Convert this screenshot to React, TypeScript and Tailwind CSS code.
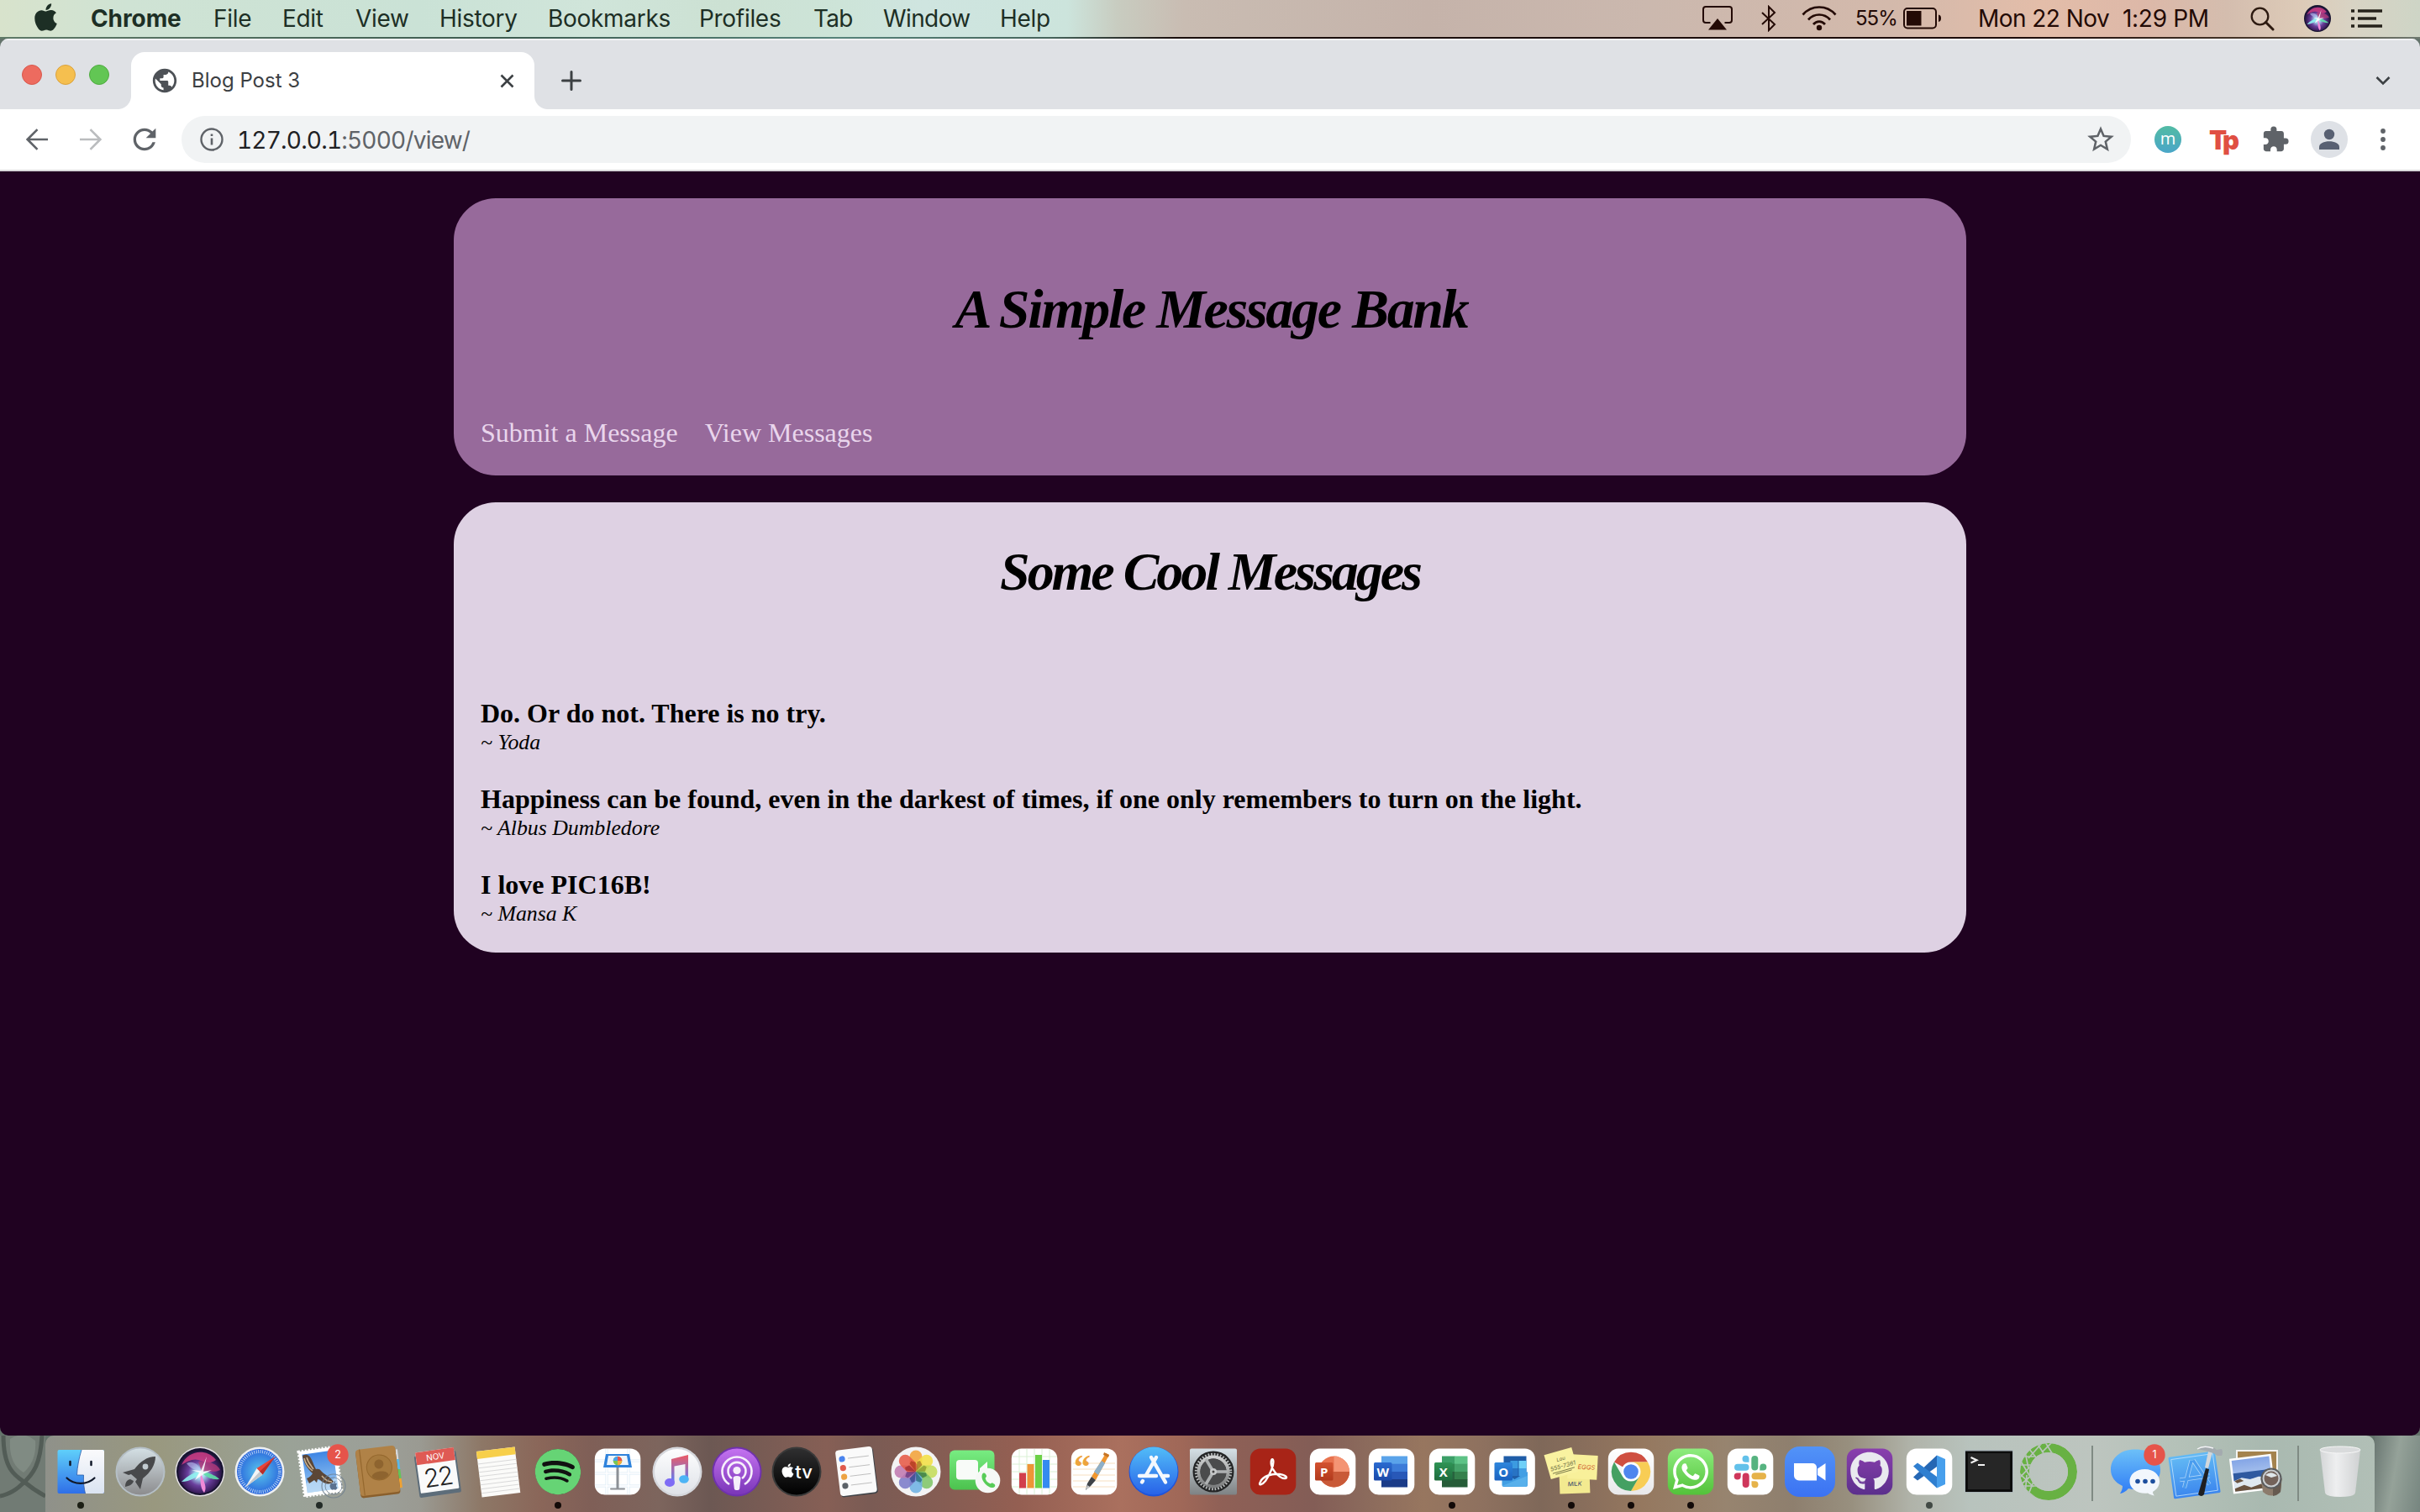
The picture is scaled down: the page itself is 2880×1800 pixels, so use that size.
import type { ReactNode } from "react";
import { FaApple, FaGithub, FaSpotify, FaWhatsapp } from "react-icons/fa";
import { MdExtension, MdPublic, MdRefresh, MdStarBorder } from "react-icons/md";

/* ---------- shared drawing helpers ---------- */

function Gradients() {
  const lin = (id: string, a: string, b: string) => (
    <linearGradient id={id} x1="0" y1="0" x2="0" y2="1">
      <stop offset="0" stopColor={a} />
      <stop offset="1" stopColor={b} />
    </linearGradient>
  );
  return (
    <svg className="absolute h-0 w-0" aria-hidden="true">
      <defs>
        {lin("gFinder", "#5fcffa", "#2f6fe8")}
        {lin("gFinderR", "#fafafc", "#dbe4f2")}
        {lin("gLaunch", "#d3dfe4", "#8c8c8e")}
        {lin("gMail", "#3f86e4", "#9cc9f2")}
        {lin("gWhite", "#fdfdfe", "#dfe2e8")}
        {lin("gPod", "#c472f0", "#7a36b8")}
        {lin("gTv", "#2f2f30", "#000000")}
        {lin("gFace", "#78ec82", "#4cc24e")}
        {lin("gStore", "#52bdf8", "#2862e8")}
        {lin("gPref", "#d5e0e6", "#7e8284")}
        {lin("gMetal", "#d0d2d2", "#7b7d7e")}
        {lin("gWhats", "#8eec7e", "#53c23a")}
        {lin("gZoom", "#5293f7", "#3b72f3")}
        {lin("gGit", "#8a3fae", "#5b2f8c")}
        {lin("gMsg", "#6cc0f8", "#2f7cf6")}
        {lin("gXcode", "#63baf4", "#3b86ee")}
        {lin("gNote", "#ed5a64", "#5c7df6")}
        {lin("gChromeBg", "#ffffff", "#e8e8ea")}
        {lin("gSea", "#84a5e6", "#c8dcf4")}
        {lin("gPpt", "#d35230", "#b13a1c")}
        {lin("gWord", "#2b6bd0", "#1a48a8")}
        {lin("gExcel", "#2f9455", "#1f6b3c")}
        {lin("gOutlook", "#2f86dc", "#1a62c0")}
        {lin("gMm", "#52bba4", "#4aa6c8")}
        <radialGradient id="gSiri" cx="50%" cy="55%" r="55%">
          <stop offset="0" stopColor="#f4ffff" />
          <stop offset="0.22" stopColor="#9fd0ea" />
          <stop offset="0.5" stopColor="#6a3f9c" />
          <stop offset="0.8" stopColor="#3a1d5c" />
          <stop offset="1" stopColor="#14122e" />
        </radialGradient>
        <radialGradient id="gSafari">
          <stop offset="0" stopColor="#59c7ec" />
          <stop offset="1" stopColor="#2a66dc" />
        </radialGradient>
        <linearGradient id="gTrash" x1="0" x2="1">
          <stop offset="0" stopColor="#d4d6d7" />
          <stop offset="0.4" stopColor="#eeeff0" />
          <stop offset="1" stopColor="#cfd1d2" />
        </linearGradient>
        <clipPath id="ringClip">
          <path clipRule="evenodd" d="M0-34A34 34 0 1 1 0 34A34 34 0 1 1 0-34ZM0-23A23 23 0 1 0 0 23A23 23 0 1 0 0-23Z" />
        </clipPath>
      </defs>
    </svg>
  );
}

function SiriOrb() {
  return (
    <g>
      <circle r="28" fill="#17132f" />
      <circle r="26" fill="url(#gSiri)" />
      <path d="M-22-8C-14-26 8-28 19-14C12-8 4-12-2-14S-16-12-22-8Z" fill="#cf3d84" opacity="0.85" />
      <path d="M-2-12C10-14 22-8 24-2C16 2 8-2 2 0Z" fill="#b23a78" opacity="0.8" />
      <path d="M-22 12C-14 4-6 0 1 0C-2 6-12 12-22 12Z" fill="#8ff2f0" opacity="0.9" />
      <path d="M1 0C8 0 18 4 23 9C14 10 6 6 1 0Z" fill="#5fe0a8" opacity="0.9" />
      <path d="M1-1C2 8 10 18 5 25C0 20 0 8 1-1Z" fill="#f08ad8" />
      <path d="M-16-10C-8-14 0-8 1 0C-6-2-12-4-16-10Z" fill="#b9c6f4" opacity="0.6" />
      <path d="M1-1L8-18L4 0L14-2L4 3L-6 10L-1 1L-10-2Z" fill="#fff" opacity="0.85" />
    </g>
  );
}

function AppTile({ fill = "#fff" }: { fill?: string }) {
  return <rect x="-27.2" y="-27.5" width="54.5" height="55" rx="12" fill={fill} />;
}

function OfficeBadge({ letter, fill }: { letter: string; fill: string }) {
  return (
    <g>
      <rect x="-21" y="-11" width="21.5" height="21.5" rx="1.5" fill={fill} />
      <text x="-10.3" y="5.6" textAnchor="middle" fontFamily="Open Sans, sans-serif" fontWeight="700" fontSize="15" fill="#fff">
        {letter}
      </text>
    </g>
  );
}

function CountBadge({ x, count }: { x: number; count: string }) {
  return (
    <g>
      <circle cx={x} cy="-20" r="12.7" fill="#e6544a" />
      <text x={x} y="-15.6" textAnchor="middle" fontFamily="Inter, sans-serif" fontSize="12.5" fill="#fff">
        {count}
      </text>
    </g>
  );
}

/* ---------- dock icons, drawn around (0,0) ---------- */

const finder = (
  <g>
    <rect x="-27.5" y="-26" width="55.5" height="52" rx="2" fill="url(#gFinder)" />
    <path d="M1-26C-2-16-4-6-4.500 4H3.500C3 12 4 20 5.500 26H26a2 2 0 0 0 2-2V-24a2 2 0 0 0-2-2Z" fill="url(#gFinderR)" />
    <path d="M1-26C-2-16-4-6-4.500 4H3.500C3 12 4 20 5.500 26" fill="none" stroke="#2b5ba8" strokeWidth="0.8" />
    <path d="M-12.500-12v4M12.500-12v4" stroke="#101828" strokeWidth="2.500" strokeLinecap="round" />
    <path d="M-16.500 7.500C-8 16 8 16 16.500 7.500" fill="none" stroke="#101828" strokeWidth="2.200" strokeLinecap="round" />
  </g>
);

const launchpad = (
  <g>
    <circle r="29.500" fill="#b5bfc6" />
    <circle r="27.500" fill="url(#gLaunch)" />
    <path d="M18-18C8-18 0-12-7-3L-21 1L-14 4L-11 3L-4 9L-6 12L0 21L3 8C12 1 18-8 18-18Z" fill="#48494b" />
    <circle cx="6" cy="-6" r="3.400" fill="#c2cbd0" />
    <path d="M-12 9C-17 10-18 14-18 18C-13 17-9 15-8 11Z" fill="#48494b" />
  </g>
);

const siri = (
  <g>
    <circle r="29.500" fill="#e4e0e4" />
    <SiriOrb />
  </g>
);

const safari = (
  <g>
    <circle r="29.500" fill="#eef0f2" />
    <circle r="27" fill="url(#gSafari)" />
    <circle r="24" fill="none" stroke="#e4f2fc" strokeWidth="4" strokeDasharray="0.900 1.613" opacity="0.8" />
    <path d="M18.500-18L-3.500-4L3.500 3.500Z" fill="#e8433a" />
    <path d="M-17 18.500L-3.500-4L3.500 3.500Z" fill="#f4f5f6" />
    <path d="M18.500-18L3.500 3.500L0 0Z" fill="#b92f2a" />
    <path d="M-17 18.500L0 0L3.500 3.500Z" fill="#c4c8cc" />
  </g>
);

const mail = (
  <g>
    <g transform="rotate(-8) translate(1 0)">
      <rect x="-22.500" y="-27" width="45" height="54" fill="#fff" />
      <rect x="-22.500" y="-27" width="45" height="54" fill="none" stroke="#fff" strokeWidth="3" strokeDasharray="2 2" />
      <rect x="-18.500" y="-23" width="37" height="46" fill="url(#gMail)" />
      <path d="M-18.500 12Q-8 6 0 12T18.500 8V23H-18.500Z" fill="#c4dff6" opacity="0.7" />
    </g>
    <path d="M-20-19C-15-22-11-19-9-14C-7-10-6-6-4-3C-1-4 1-3 3 0C7 4 13 6 17 12C13 16 6 15 1 10C0 9-1 9-2 9L-3 13L-6 10L-12 14L-14 10L-15 8C-12 7-9 4-8 2C-14-3-19-11-20-19Z" fill="#5b4636" />
    <path d="M-18-16C-16-8-12-4-8-1M-15-17C-13-10-9-6-7-3M3 5C7 10 11 12 15 12" stroke="#c9b08e" strokeWidth="1.500" fill="none" />
    <circle cx="17" cy="17" r="14" fill="none" stroke="#6f7f90" strokeWidth="1.200" opacity="0.8" />
    <circle cx="17" cy="17" r="10" fill="none" stroke="#6f7f90" strokeWidth="1" opacity="0.8" />
    <g transform="translate(11 10.500)" className="text-[#5b7290]">
      <FaApple size={12} />
    </g>
    <CountBadge x={22} count="2" />
  </g>
);

const contacts = (
  <g transform="rotate(-7)">
    <path d="M22-24h3v12h-3z" fill="#d7d8da" />
    <path d="M22-12h3.500v12H22z" fill="#5cb8e6" />
    <path d="M22 0h3.500v11H22z" fill="#63c45a" />
    <path d="M22 11h3.500v11H22z" fill="#efa233" />
    <rect x="-25" y="-28" width="47.500" height="57" rx="4" fill="#8a5f2c" />
    <rect x="-25" y="-29" width="47.500" height="55.500" rx="4" fill="#b08247" />
    <path d="M-20-29v55" stroke="#94682e" strokeWidth="1.200" />
    <circle cx="1" cy="-5" r="15" fill="#a67a3e" stroke="#94682e" strokeWidth="1" />
    <circle cx="1" cy="-9" r="5.500" fill="#8e642f" />
    <path d="M-9 5C-8-2 10-2 11 5C6 11-4 11-9 5Z" fill="#8e642f" />
  </g>
);

const calendar = (
  <g transform="translate(-1.500 0) rotate(-8)">
    <rect x="-25" y="-22" width="50" height="50" rx="2" fill="#5d6d7a" />
    <rect x="-23" y="-26" width="46" height="49" rx="1" fill="#fafafa" />
    <path d="M-23-26H23V-11H-23Z" fill="#df5a54" />
    <text y="-14.500" textAnchor="middle" fontFamily="Inter, sans-serif" fontSize="10" fill="#fff">NOV</text>
    <text y="17" textAnchor="middle" fontFamily="Inter, sans-serif" fontWeight="300" fontSize="30" letterSpacing="-1.500" fill="#222">22</text>
  </g>
);

const notes = (
  <g transform="rotate(-7)">
    <rect x="-23" y="-27" width="46" height="55" fill="#fbfbf9" />
    <rect x="-23" y="-27" width="46" height="9" fill="#f7cf4a" />
    <path d="M-23-12H23M-23-7H23M-23-2H23M-23 3H23M-23 8H23M-23 13H23M-23 18H23M-23 23H23" stroke="#d9d9d9" strokeWidth="1" />
  </g>
);

const spotify = (
  <g>
    <circle r="27" fill="#111" />
    <g transform="translate(-28 -28)" className="text-[#66d475]">
      <FaSpotify size={56} />
    </g>
  </g>
);

const keynote = (
  <g>
    <AppTile />
    <path d="M-27-13H27M-27 2H27M-27 17H27M-13-27V27M13-27V27" stroke="#dcebf6" strokeWidth="3" />
    <path d="M-27-13H27M-27 2H27M-27 17H27M-13-27V27M13-27V27" stroke="#fff" strokeWidth="1.600" />
    <path d="M-14-21H14L17-5H-17Z" fill="#2f83dc" />
    <path d="M-11-19H11L13-8H-13Z" fill="#eef4fa" />
    <circle cy="-13" r="5.300" fill="#7cc653" />
    <path d="M0-13V-18.300A5.300 5.300 0 0 1 5.300-13Z" fill="#e8534a" />
    <path d="M0-13H-5.300A5.300 5.300 0 0 1 0-18.300Z" fill="#4aa3e8" />
    <path d="M0-13H5.300A5.300 5.300 0 0 1 0-7.700Z" fill="#f3a93c" />
    <rect x="-1.500" y="-5" width="3" height="25" fill="#8c9096" />
    <rect x="-9" y="19.500" width="18" height="2" rx="1" fill="#8c9096" />
  </g>
);

const music = (
  <g>
    <circle r="29.500" fill="#d5d7dc" />
    <circle r="27" fill="url(#gWhite)" />
    <path d="M-7-15L13-20V8H9.500V-9L-3.500-6.500V12H-7Z" fill="url(#gNote)" />
    <ellipse cx="-9" cy="13" rx="6" ry="5" fill="#7e6cf5" />
    <ellipse cx="8" cy="9" rx="5.800" ry="4.800" fill="#4db4f5" />
  </g>
);

const podcasts = (
  <g>
    <circle r="29.500" fill="#6f31ad" />
    <circle r="27.500" fill="url(#gPod)" />
    <path d="M-9 15A17.500 17.500 0 1 1 9 15M-6 8A10.500 10.500 0 1 1 6 8" fill="none" stroke="#f6effb" strokeWidth="2.600" />
    <circle cy="-1.500" r="4.600" fill="#f6effb" />
    <path d="M-4.500 8Q-4.500 5 0 5T4.500 8L3.200 20Q3 22 0 22T-3.200 20Z" fill="#f6effb" />
  </g>
);

const appleTv = (
  <g>
    <circle r="29.500" fill="#3a3a3a" />
    <circle r="27.500" fill="url(#gTv)" />
    <g transform="translate(-20 -11)" className="text-white">
      <FaApple size={19} />
    </g>
    <text x="8.500" y="7.500" textAnchor="middle" fontFamily="Inter, sans-serif" fontWeight="500" fontSize="22" fill="#fff">tv</text>
  </g>
);

const reminders = (
  <g transform="rotate(-7)">
    <rect x="-21" y="-26.500" width="44" height="55" rx="4" fill="#3e4348" />
    <rect x="-22" y="-28" width="44" height="55" rx="4" fill="#fafafa" />
    {["#4a84ee", "#e05a4c", "#eda343", "#5c6268"].map((c, i) => (
      <g key={c}>
        <circle cx="-15" cy={-17 + i * 10.700} r="3.600" fill={c} />
        <path d={`M-8 ${-17 + i * 10.700}H17`} stroke="#bbb" strokeWidth="0.900" />
      </g>
    ))}
  </g>
);

const photos = (
  <g>
    <circle r="29.500" fill="#f3f3f4" />
    {["#f2a33a", "#f3df44", "#c4dc5a", "#80c568", "#6eb2e4", "#7c7cc8", "#c07ab0", "#e65a48"].map((c, i) => (
      <rect key={c} x="-7.500" y="-25.500" width="15" height="25" rx="7.500" fill={c} opacity="0.88" transform={`rotate(${i * 45})`} />
    ))}
    {["#a8782c", "#8c9a30", "#3c7a44", "#2c6c80", "#384a90", "#6a3a80", "#a02c30", "#b03c20"].map((c, i) => (
      <path key={c} d="M0 0L1.500-12L5-13L7.500-8Z" fill={c} opacity="0.8" transform={`rotate(${i * 45})`} />
    ))}
  </g>
);

const facetime = (
  <g>
    <rect x="-31" y="-25.500" width="53.500" height="47" rx="6" fill="url(#gFace)" />
    <rect x="-23" y="-14" width="26" height="23.500" rx="4" fill="#f8fbf8" />
    <path d="M5-4L14-12V8H5Z" fill="#f8fbf8" />
    <circle cx="14.500" cy="10.500" r="14.800" fill="#f6f8f6" />
    <path d="M8 3C10 0 12 2 13 5C13 7 11 7 12 9C13 12 15 13 17 14C19 15 19 12 21 14C24 15 24 18 21 19C15 20 5 10 8 3Z" fill="#58cc58" />
  </g>
);

const numbers = (
  <g>
    <AppTile />
    <path d="M-27-18H27M-27-9H27M-27 0H27M-27 9H27M-27 18H27M-18-27V27M-9-27V27M0-27V27M9-27V27M18-27V27" stroke="#d9f0d4" strokeWidth="1" />
    <rect x="-18" y="1.500" width="8" height="18" fill="#d23f4c" />
    <rect x="-8.500" y="-9" width="8" height="28.500" fill="#ee9537" />
    <rect x="1" y="-20" width="8" height="39.500" fill="#6cd147" />
    <rect x="10" y="-14" width="8" height="33.500" fill="#348bf0" />
  </g>
);

const pages = (
  <g>
    <AppTile />
    <path d="M-25-10H25M-25-3H25M-25 4H25M-25 11H25M-25 18H25" stroke="#f7dfc0" strokeWidth="1" />
    <text x="-14" y="8" textAnchor="middle" fontFamily="Liberation Serif, serif" fontWeight="700" fontSize="40" fill="#eda43c">“</text>
    <path d="M14-22L18-20L2 10L-3 6Z" fill="#f0962f" />
    <path d="M9-13L13-10L5 4L0 0Z" fill="#8fb0c8" />
    <path d="M12-23L18-20L17-17L11-20Z" fill="#c77524" />
    <path d="M-3 6L2 10L-4 17L-10 22L-8 14Z" fill="#3e4248" />
    <path d="M-8 16L-5 18L-10 22Z" fill="#c8cacc" />
  </g>
);

const appStore = (
  <g>
    <circle r="29.500" fill="#1d54dc" />
    <circle r="28.500" cy="-1" fill="url(#gStore)" />
    <g stroke="#f4f8fd" strokeWidth="4.400" strokeLinecap="round" fill="none">
      <path d="M3-17L-9 4M-13 11L-14 12.500M-3-17L14 12.500M-17 5H3M12 5H17" />
    </g>
  </g>
);

const preferences = (
  <g>
    <rect x="-28" y="-27.500" width="56" height="55" rx="2" fill="url(#gPref)" />
    <circle r="24.500" fill="#232425" />
    <circle r="20.500" fill="none" stroke="#b5b8b9" strokeWidth="3.500" strokeDasharray="1.800 1.780" />
    <circle r="17.500" fill="none" stroke="url(#gMetal)" strokeWidth="4" />
    <circle r="15.500" fill="#4a4b4c" />
    <g stroke="#aeb1b2" strokeWidth="3.600">
      <path d="M0 0H17M0 0L-9-15M0 0L-9 15" />
    </g>
    <circle r="4" fill="#c7c9ca" />
    <circle r="1.500" fill="#444" />
  </g>
);

const acrobat = (
  <g>
    <AppTile fill="#a82417" />
    <path
      d="M-15 12C-12 5-1 2 8 3C16 4 18 8 14 8C8 8 0 0-2-8C-3-14-1-16 0-14C2-9-4 4-9 11C-13 16-18 17-15 12Z"
      fill="none"
      stroke="#fff"
      strokeWidth="2.400"
    />
  </g>
);

const powerpoint = (
  <g>
    <AppTile />
    <circle cx="1.500" r="18.500" fill="#e8734f" />
    <path d="M1.500-18.500A18.500 18.500 0 0 1 20 0H1.500Z" fill="#f49474" />
    <path d="M-17 0H20A18.500 18.500 0 0 1-17 0Z" fill="#c95a38" />
    <OfficeBadge letter="P" fill="url(#gPpt)" />
  </g>
);

const word = (
  <g transform="translate(-1 0)">
    <AppTile />
    <rect x="-12" y="-18.500" width="31" height="9.500" fill="#5aa3ea" />
    <rect x="-12" y="-9.300" width="31" height="9.500" fill="#3c7bd8" />
    <rect x="-12" y="0" width="31" height="9.300" fill="#2858b8" />
    <rect x="-12" y="9" width="31" height="9.500" fill="#1b3c88" />
    <OfficeBadge letter="W" fill="url(#gWord)" />
  </g>
);

const excel = (
  <g>
    <AppTile />
    <rect x="-12" y="-18.500" width="15.500" height="9.500" fill="#3c9f68" />
    <rect x="3" y="-18.500" width="15.500" height="9.500" fill="#5dc286" />
    <rect x="-12" y="-9.300" width="15.500" height="9.500" fill="#2f8850" />
    <rect x="3" y="-9.300" width="15.500" height="9.500" fill="#46a36a" />
    <rect x="-12" y="0" width="15.500" height="9.300" fill="#27633e" />
    <rect x="3" y="0" width="15.500" height="9.300" fill="#35804c" />
    <rect x="-12" y="9" width="30.500" height="9.500" fill="#265c38" />
    <OfficeBadge letter="X" fill="url(#gExcel)" />
  </g>
);

const outlook = (
  <g transform="translate(0.500 0)">
    <AppTile />
    <rect x="-10" y="-18.500" width="27" height="30" fill="#1f5da8" />
    <rect x="-2" y="-13" width="9" height="9" fill="#3c9be0" />
    <rect x="8" y="-13" width="9" height="9" fill="#6fd0f8" />
    <rect x="-2" y="-4" width="9" height="9" fill="#2873c4" />
    <rect x="8" y="-4" width="9" height="9" fill="#429fe4" />
    <path d="M-12 0L3 9L18.500 0V16a2 2 0 0 1-2 2H-10a2 2 0 0 1-2-2Z" fill="#429fe4" />
    <path d="M-12 17L18 5V16L16 18Z" fill="#62b8ee" opacity="0.7" />
    <OfficeBadge letter="O" fill="url(#gOutlook)" />
  </g>
);

const stickies = (
  <g>
    <g transform="rotate(-2 3 14)">
      <rect x="-14" y="-2" width="36" height="28" fill="#f3ea90" />
      <text x="4" y="17" textAnchor="middle" fontFamily="Inter, sans-serif" fontStyle="italic" fontSize="7" fill="#31406a">MILK</text>
    </g>
    <g transform="rotate(3 14 -6)">
      <rect x="-4" y="-20" width="35" height="29" fill="#f8f09a" />
      <text x="18" y="-3" textAnchor="middle" fontFamily="Inter, sans-serif" fontStyle="italic" fontSize="7.500" fill="#cf5a2c">EGGS</text>
    </g>
    <g transform="rotate(-16 -12 -10)">
      <rect x="-29" y="-25" width="34" height="30" fill="#f9f2a0" />
      <text x="-11" y="-13" textAnchor="middle" fontFamily="Inter, sans-serif" fontStyle="italic" fontSize="6" fill="#6a6a40">Lou</text>
      <text x="-11" y="-4" textAnchor="middle" fontFamily="Inter, sans-serif" fontStyle="italic" fontSize="7" fill="#6a6a40">555-7361</text>
      <path d="M-25-1H2M-22 1H-2" stroke="#6a6a40" strokeWidth="0.800" />
    </g>
  </g>
);

const chrome = (
  <g>
    <AppTile fill="url(#gChromeBg)" />
    <path d="M-20-11.500A23 23 0 0 1 20-11.500H0A11.500 11.500 0 0 0-10 -5.700Z" fill="#cf4f41" />
    <path d="M20-11.500A23 23 0 0 1 0 23L10 5.700A11.500 11.500 0 0 0 0-11.500Z" fill="#f8cd55" />
    <path d="M0 23A23 23 0 0 1-20-11.500L-10 5.700A11.500 11.500 0 0 0 10 5.700Z" fill="#45a062" />
    <circle r="11" fill="#fff" />
    <circle r="8.800" fill="#4f86ee" />
  </g>
);

const whatsapp = (
  <g>
    <AppTile fill="url(#gWhats)" />
    <g transform="translate(-24 -24)" className="text-white">
      <FaWhatsapp size={48} />
    </g>
  </g>
);

const slack = (
  <g>
    <AppTile />
    {[
      ["#62c1ea", 0],
      ["#56b380", 90],
      ["#e6b34a", 180],
      ["#cf375b", 270],
    ].map(([c, r]) => (
      <g key={String(c)} transform={`rotate(${r})`} fill={String(c)}>
        <rect x="-19" y="-9.300" width="17.500" height="8" rx="4" />
        <path d="M-1.500-11.300H-5.500A4 4 0 1 1-1.500-15.300Z" />
      </g>
    ))}
  </g>
);

const zoomApp = (
  <g>
    <rect x="-30" y="-30" width="60" height="60" rx="18" fill="url(#gZoom)" />
    <path d="M-19-10H3a5 5 0 0 1 5 5V10.500H-13a6 6 0 0 1-6-6Z" fill="#fff" />
    <path d="M9-3.500L18.500-10V10.500L9 4Z" fill="#fff" />
  </g>
);

const github = (
  <g>
    <AppTile fill="url(#gGit)" />
    <g transform="translate(-23.500 -24)" className="text-[#e9e9ef]">
      <FaGithub size={47} />
    </g>
  </g>
);

const vscode = (
  <g>
    <AppTile />
    <path d="M9-19.500L-19 6.500L-14 10.500L9-6Z" fill="#2567b4" />
    <path d="M9 19.500L-19-6.500L-14-10.500L9 6Z" fill="#2f7fd0" />
    <path d="M9-19.500L19-15V15L9 19.500Z" fill="#479fec" />
  </g>
);

const terminal = (
  <g>
    <rect x="-29" y="-26" width="58" height="51" rx="2" fill="#a9b4b8" />
    <rect x="-28" y="-24.500" width="56" height="48.500" fill="#0c0c0c" />
    <rect x="-25" y="-22" width="50" height="43" fill="#262626" />
    <path d="M-21.500-17L-14.500-13.700L-21.500-10.500M-13-8H-5" fill="none" stroke="#f2f2f2" strokeWidth="2.100" />
  </g>
);

const anaconda = (
  <g clipPath="url(#ringClip)">
    <circle r="28.500" fill="none" stroke="#68b143" strokeWidth="11" />
    <g stroke="#bac4be" strokeWidth="1.700" fill="none">
      <path d="M4-35L-8-23M-4-35L4-22M-14-34L-6-22M-8-34L-24-16M-24-28L-14-16M-34-18L-16-18M-28-24L-24-4M-37-8L-20-8M-34-14L-22 6M-20-8L-37 10M-37 0L-18 18M-20 4L-36 18M-36 17H-14M-26 4L-28 28M-18 12L-26 32M-32 18L-12 34" />
    </g>
  </g>
);

const messages = (
  <g>
    <path d="M-2-26.500C17-26.500 28-16 28-2.500S17 21-2 21C-5 21-8 20.500-10 20C-13 24-17 25.500-20 26C-18 23-17 20-17 17C-26 13-31 6-31-2.500C-31-16-20-26.500-2-26.500Z" fill="url(#gMsg)" />
    <path d="M9.500-3C20-3 27 3.500 27 11.500C27 17 24 21 19 24C19 26 20 27.500 21 28.500C18 28 15 27 13 25.500C1 27-8.500 20-8.500 11.500C-8.500 3.500-1-3 9.500-3Z" fill="#f2f7fc" />
    <g fill="#1d4f9e">
      <circle cx="1" cy="11.500" r="2.800" />
      <circle cx="10" cy="11.500" r="2.800" />
      <circle cx="19" cy="11.500" r="2.800" />
    </g>
    <CountBadge x={21} count="1" />
  </g>
);

const xcode = (
  <g>
    <g transform="rotate(-8) translate(-3 3)">
      <rect x="-28" y="-24.500" width="56" height="50" rx="1.500" fill="url(#gXcode)" />
      <rect x="-25" y="-21.500" width="50" height="44" fill="none" stroke="#bfe0fa" strokeWidth="0.800" />
      <g stroke="#d5ebfc" strokeWidth="5" opacity="0.7">
        <path d="M-1-17L-14 14M1-17L16 14M-18 4H18" />
      </g>
      <g stroke="#4a9cee" strokeWidth="3.400">
        <path d="M-1-17L-14 14M1-17L16 14M-18 4H18" />
      </g>
    </g>
    <path d="M9 27Q6 31 2 27L11-4L15-3Z" fill="#1f1f21" />
    <path d="M14-24L19-23L14-4L10-5Z" fill="#d3d7da" />
    <path d="M1-27C7-32 14-31 20-29L24-26L30-27Q32-23 30-19L25-19L20-22C14-24 8-26 1-27Z" fill="#a4abaf" />
    <path d="M1-27C7-31 14-30 20-28" stroke="#f4f5f6" strokeWidth="1.500" fill="none" />
  </g>
);

const preview = (
  <g>
    <rect x="-24" y="-26" width="50" height="44" fill="#f3f3f0" />
    <rect x="-22" y="-24" width="46" height="40" fill="#a4834e" />
    <g transform="rotate(-7)">
      <rect x="-30" y="-19" width="50" height="42" fill="#fcfcfc" />
      <rect x="-27.500" y="-16.500" width="45" height="37" fill="url(#gSea)" />
      <rect x="-27.500" y="-1" width="45" height="9" fill="#2f5aa0" />
      <path d="M-27.500 8L-18 5L-8 8L2 6L17.500 8V20.500H-27.500Z" fill="#dfe8f0" />
      <path d="M-27.500 17L-16 14L-8 18L4 15L17.500 20.500H-27.500ZM-27 8L-20 6L-16 9L-24 11Z" fill="#6a5340" />
    </g>
    <path d="M5.500 8H30.500L29 24Q18 33 8 24Z" fill="#8c7b6c" />
    <path d="M20 12V29Q26 28 29 24L30.500 8Z" fill="#665a50" />
    <circle cx="18" cy="8" r="12.500" fill="#5a5c5e" />
    <circle cx="18" cy="8" r="10.500" fill="#c9cdd0" />
    <circle cx="18" cy="8" r="8.500" fill="#73625a" />
    <path d="M11 4Q18-2 25 5L18 7Z" fill="#dfe6ea" />
  </g>
);

const trash = (
  <g>
    <path d="M-24-26L-18 25Q-17 30 0 30T18 25L24-26Z" fill="url(#gTrash)" />
    <ellipse cy="-26" rx="24" ry="4" fill="#d9dbdc" stroke="#f7f7f7" strokeWidth="1" />
  </g>
);

type DockApp = { id: string; icon: ReactNode; running?: string };

const RUNNING = "bg-[#120a08]";

const APPS: DockApp[] = [
  { id: "finder", icon: finder, running: "bg-[#1c1f14]" },
  { id: "launchpad", icon: launchpad },
  { id: "siri", icon: siri },
  { id: "safari", icon: safari },
  { id: "mail", icon: mail, running: "bg-[#232b27]" },
  { id: "contacts", icon: contacts },
  { id: "calendar", icon: calendar },
  { id: "notes", icon: notes },
  { id: "spotify", icon: spotify, running: RUNNING },
  { id: "keynote", icon: keynote },
  { id: "music", icon: music },
  { id: "podcasts", icon: podcasts },
  { id: "tv", icon: appleTv },
  { id: "reminders", icon: reminders },
  { id: "photos", icon: photos },
  { id: "facetime", icon: facetime },
  { id: "numbers", icon: numbers },
  { id: "pages", icon: pages },
  { id: "appstore", icon: appStore },
  { id: "preferences", icon: preferences },
  { id: "acrobat", icon: acrobat },
  { id: "powerpoint", icon: powerpoint },
  { id: "word", icon: word },
  { id: "excel", icon: excel, running: RUNNING },
  { id: "outlook", icon: outlook },
  { id: "stickies", icon: stickies, running: RUNNING },
  { id: "chrome", icon: chrome, running: RUNNING },
  { id: "whatsapp", icon: whatsapp, running: RUNNING },
  { id: "slack", icon: slack },
  { id: "zoom", icon: zoomApp },
  { id: "github", icon: github },
  { id: "vscode", icon: vscode, running: "bg-[#424a45]" },
  { id: "terminal", icon: terminal },
  { id: "anaconda", icon: anaconda },
];

function DockSlot({ app }: { app: DockApp }) {
  return (
    <div className="flex w-[70.97px] shrink-0 flex-col items-center">
      <svg viewBox="-36 -43 72 79" className="h-[79px] w-[72px] shrink-0 overflow-visible">
        {app.icon}
      </svg>
      {app.running && <div className={`h-2 w-2 rounded-full ${app.running}`} />}
    </div>
  );
}

function DesktopEdge() {
  return (
    <svg viewBox="0 0 54 91" className="h-[91px] w-[54px] shrink-0">
      <rect width="54" height="91" fill="#717b74" />
      <g fill="none" stroke="#48524c" strokeWidth="5" opacity="0.75">
        <path d="M4 0C4 40 18 48 30 56C42 66 54 72 54 72M50 0C48 34 40 46 26 58C14 70 0 72 0 72" />
      </g>
      <path d="M12 4Q28-6 42 6Q44 30 28 44Q10 34 12 4Z" fill="#808b83" />
    </svg>
  );
}

function Dock() {
  return (
    <div className="flex h-[91px] shrink-0">
      <DesktopEdge />
      <div className="flex h-[91px] w-[2772px] shrink-0 rounded-t-[10px] bg-[linear-gradient(90deg,#8f918a_0px,#99987f_130px,#9aa297_290px,#9c9f98_400px,#9a9a92_446px,#8d7766_520px,#8a6659_590px,#7f5f57_650px,#7d655d_730px,#6c5853_790px,#865f55_930px,#7a5b54_980px,#875d53_1080px,#945f52_1160px,#aa705e_1280px,#a06858_1350px,#8f6056_1400px,#835d56_1510px,#8b6a5c_1570px,#97765f_1640px,#8e715f_1710px,#7f6859_1780px,#8a6f5c_1840px,#95785f_1900px,#97846f_2000px,#8e7f6e_2080px,#98907f_2150px,#b0b3a9_2220px,#b8c3bd_2290px,#bdc5bf_2440px,#b4c1b8_2540px,#a9b9b0_2640px,#b1bfb6_2772px)] pl-[6.5px]">
        {APPS.map((app) => (
          <DockSlot key={app.id} app={app} />
        ))}
        <div className="flex w-[34px] shrink-0 justify-center pt-3">
          <div className="h-[66px] w-[2px] bg-[#808b84]" />
        </div>
        <DockSlot app={{ id: "messages", icon: messages }} />
        <DockSlot app={{ id: "xcode", icon: xcode }} />
        <DockSlot app={{ id: "preview", icon: preview }} />
        <div className="flex w-[29px] shrink-0 justify-center pt-3">
          <div className="h-[66px] w-[2px] bg-[#808b84]" />
        </div>
        <DockSlot app={{ id: "trash", icon: trash }} />
      </div>
      <div className="h-[91px] flex-1 bg-[linear-gradient(100deg,#6a7772_0%,#95a299_45%,#76857f_100%)]" />
    </div>
  );
}

/* ---------- menu bar ---------- */

function MenuBar() {
  return (
    <div className="flex h-11 shrink-0 items-center bg-[linear-gradient(90deg,#d8e3cc_0px,#cfe3d4_150px,#cae2d6_500px,#d0e5da_700px,#cce1d3_860px,#cde4d8_1000px,#cfe5e0_1100px,#cce4dc_1270px,#c8ccc0_1330px,#c9bcb2_1410px,#c5b3aa_1700px,#cbb8ae_1960px,#d3b9ab_2250px,#e3bda9_2430px,#ddb8a8_2550px,#d4bdae_2650px,#ddcbb8_2740px,#d8d3c4_2800px,#ced5c6_2880px)] text-[28px] leading-[44px] tracking-[-0.3px] whitespace-nowrap text-[#1d2f25]">
      <div className="flex w-[108px] shrink-0 pl-[41px]">
        <svg viewBox="0 0 384 512" preserveAspectRatio="none" className="-mt-1 h-[37px] w-[27px] overflow-visible">
          <FaApple size={512} x={-64} />
        </svg>
      </div>
      <div className="w-[146px] font-bold tracking-[-0.1px]">Chrome</div>
      <div className="w-[82px]">File</div>
      <div className="w-[87px]">Edit</div>
      <div className="w-[100px]">View</div>
      <div className="w-[129px]">History</div>
      <div className="w-[180px]">Bookmarks</div>
      <div className="w-[136px]">Profiles</div>
      <div className="w-[83px] tracking-[-0.8px]">Tab</div>
      <div className="w-[139px] tracking-[-0.6px]">Window</div>
      <div className="w-[100px]">Help</div>

      <div className="ml-auto flex h-11 items-center text-[#230a05]">
        <svg viewBox="0 0 36 30" className="h-[30px] w-9">
          <path d="M9.500 20H4a3 3 0 0 1-3-3V4a3 3 0 0 1 3-3H32a3 3 0 0 1 3 3V17a3 3 0 0 1-3 3H26.500" fill="none" stroke="currentColor" strokeWidth="2" />
          <path d="M18 15L29 28.500H7Z" fill="currentColor" />
        </svg>
        <svg viewBox="0 0 20 32" className="ml-[33px] h-8 w-5">
          <path d="M2 9L17 23L10 30V2L17 9L2 23" fill="none" stroke="currentColor" strokeWidth="2" />
        </svg>
        <svg viewBox="0 0 42 30" className="ml-[29px] h-[30px] w-[42px]">
          <g fill="none" stroke="currentColor" strokeWidth="2.700">
            <path d="M1.500 10.500C12-1.500 30-1.500 40.500 10.500M8 16.500C15 8.500 27 8.500 34 16.500M14 22C18 17.500 24 17.500 28 22" />
          </g>
          <circle cx="21" cy="26" r="3.200" fill="currentColor" />
        </svg>
        <div className="ml-[22px] w-[57px] text-[24px] tracking-[-1px]">55%</div>
        <svg viewBox="0 0 46 26" className="h-[26px] w-[46px]">
          <rect x="1" y="1" width="38" height="23.500" rx="4" fill="none" stroke="currentColor" strokeWidth="2" />
          <rect x="4" y="4" width="17.500" height="17.500" fill="currentColor" />
          <path d="M42 8.500Q45 9 45 12.700T42 17Z" fill="currentColor" />
        </svg>
        <div className="ml-[43px] w-[172px] tracking-[-0.55px]">Mon 22 Nov</div>
        <div className="w-[152px]">1:29 PM</div>
        <svg viewBox="0 0 29 29" className="h-[29px] w-[29px] text-[#2d1a10]">
          <circle cx="11.500" cy="11.500" r="9.800" fill="none" stroke="currentColor" strokeWidth="2.300" />
          <path d="M18.500 18.500L27 27" stroke="currentColor" strokeWidth="3" strokeLinecap="round" />
        </svg>
        <svg viewBox="-28 -28 56 56" className="ml-[35px] h-8 w-8">
          <SiriOrb />
        </svg>
        <svg viewBox="0 0 37 22" className="mr-[45px] ml-[24px] h-[22px] w-[37px] text-[#25221a]">
          <path d="M0 2H4M8 2H37M0 11H4M8 11H30M0 20H4M8 20H37" stroke="currentColor" strokeWidth="3.600" />
        </svg>
      </div>
    </div>
  );
}

/* ---------- browser chrome ---------- */

function TabStrip() {
  return (
    <div className="flex h-[84px] shrink-0 bg-[#dfe1e5] shadow-[inset_0_2px_0_#f0f1f3]">
      <div className="flex w-[140px] items-center gap-4 pt-[2px] pl-[26px]">
        <div className="h-6 w-6 shrink-0 rounded-full border border-[#d8574c] bg-[#ed6b5f]" />
        <div className="h-6 w-6 shrink-0 rounded-full border border-[#dba23c] bg-[#f5bf4f]" />
        <div className="h-6 w-6 shrink-0 rounded-full border border-[#4fab3f] bg-[#62c654]" />
      </div>
      <div className="h-4 w-4 self-end bg-[radial-gradient(circle_at_0_0,transparent_15.5px,#fff_16.5px)]" />
      <div className="mt-4 flex w-[480px] items-center rounded-t-2xl bg-white pr-6 pl-[23px] text-[24px] text-[#3c4043]">
        <MdPublic size={34} className="text-[#4d5156]" />
        <div className="ml-[15px] flex-1">Blog Post 3</div>
        <svg viewBox="0 0 17 17" className="h-[17px] w-[17px] text-[#3c4043]">
          <path d="M1.500 1.500L15.500 15.500M15.500 1.500L1.500 15.500" stroke="currentColor" strokeWidth="2.600" />
        </svg>
      </div>
      <div className="h-4 w-4 self-end bg-[radial-gradient(circle_at_100%_0,transparent_15.5px,#fff_16.5px)]" />
      <div className="flex flex-1 items-center justify-between pt-4 pr-[35px] pl-4 text-[#3c4043]">
        <svg viewBox="0 0 24 24" className="h-6 w-6">
          <path d="M12 1.500V22.500M1.500 12H22.500" stroke="currentColor" strokeWidth="3" strokeLinecap="round" />
        </svg>
        <svg viewBox="0 0 18 12" className="h-3 w-[18px]">
          <path d="M1.500 2L9 9.500L16.500 2" fill="none" stroke="currentColor" strokeWidth="2.600" />
        </svg>
      </div>
    </div>
  );
}

function Toolbar() {
  return (
    <div className="flex h-[74px] shrink-0 items-center border-b-2 border-[#d9d9db] bg-white pl-[31px] text-[#5f6368]">
      <svg viewBox="0 0 26 26" className="h-[26px] w-[26px]">
        <path d="M26 13H2M13.500 1.200L1.700 13L13.500 24.800" fill="none" stroke="currentColor" strokeWidth="2.600" />
      </svg>
      <svg viewBox="0 0 26 26" className="ml-[38px] h-[26px] w-[26px] text-[#babcbe]">
        <path d="M0 13H24M12.500 1.200L24.300 13L12.500 24.800" fill="none" stroke="currentColor" strokeWidth="2.600" />
      </svg>
      <MdRefresh size={40} className="ml-[31px]" />
      <div className="ml-[24px] flex h-14 w-[2320px] items-center rounded-full bg-[#f1f3f4] pr-[17px] pl-[22px]">
        <svg viewBox="0 0 28 28" className="h-7 w-7">
          <circle cx="14" cy="14" r="12.500" fill="none" stroke="currentColor" strokeWidth="2.400" />
          <path d="M14 12.500V20.500M14 7.500V10" stroke="currentColor" strokeWidth="2.600" />
        </svg>
        <div className="ml-4 flex-1 pt-px text-[28px] leading-[56px] tracking-[-0.8px] tabular-nums">
          <span className="text-[#202124]">127.0.0.1</span>
          <span>:5000/view/</span>
        </div>
        <MdStarBorder size={38} />
      </div>
      <svg viewBox="0 0 32 32" className="ml-7 h-8 w-8">
        <circle cx="16" cy="16" r="16" fill="url(#gMm)" />
        <text x="16" y="21.500" textAnchor="middle" fontFamily="Open Sans, sans-serif" fontSize="20" fill="#fff">m</text>
      </svg>
      <div className="ml-[33px] h-[36px] w-[32px] text-[31px] leading-[38px] font-black tracking-[-3.500px] text-[#e04f43]">
        Tp
      </div>
      <MdExtension size={34} className="ml-[30px]" />
      <svg viewBox="0 0 44 44" className="ml-[25px] h-11 w-11">
        <circle cx="22" cy="22" r="22" fill="#dee1e6" />
        <circle cx="22" cy="16" r="6.200" fill="#586072" />
        <path d="M10 34V31C10 22 34 22 34 31V34Z" fill="#586072" />
      </svg>
      <svg viewBox="0 0 6 26" className="ml-[39px] h-[26px] w-[6px]">
        <circle cx="3" cy="3" r="2.900" fill="currentColor" />
        <circle cx="3" cy="13" r="2.900" fill="currentColor" />
        <circle cx="3" cy="23" r="2.900" fill="currentColor" />
      </svg>
    </div>
  );
}

/* ---------- message bank page ---------- */

const POSTS = [
  { text: "Do. Or do not. There is no try.", author: "Yoda" },
  {
    text: "Happiness can be found, even in the darkest of times, if one only remembers to turn on the light.",
    author: "Albus Dumbledore",
  },
  { text: "I love PIC16B!", author: "Mansa K" },
];

function MessageBank() {
  return (
    <main className="flex min-h-0 flex-1 flex-col items-center gap-8 bg-[#200221] pt-8 font-['Liberation_Serif',serif] text-[32px] leading-9 text-black">
      <header className="flex h-[330px] w-[1800px] flex-col rounded-[50px] bg-[#976a9b] px-8 pt-[92px]">
        <h1 className="pl-[3px] text-center font-['Apple_Chancery','Liberation_Serif',cursive] text-[66px] leading-[80px] font-bold tracking-[-2.3px] italic">
          A Simple Message Bank
        </h1>
        <nav className="mt-[89px] flex gap-8 text-[#e9d5ec]">
          <a>Submit a Message</a>
          <a>View Messages</a>
        </nav>
      </header>
      <section className="flex h-[536px] w-[1800px] flex-col rounded-[50px] bg-[#ded1e3] px-8 pt-[43px]">
        <h1 className="text-center font-['Apple_Chancery','Liberation_Serif',cursive] text-[64px] leading-[80px] font-bold tracking-[-3.05px] italic">
          Some Cool Messages
        </h1>
        <div className="mt-[110px] flex flex-col gap-[32px]">
          {POSTS.map((p) => (
            <article key={p.author}>
              <p className="font-bold">{p.text}</p>
              <p className="text-[25.8px] leading-[34px] italic">~ {p.author}</p>
            </article>
          ))}
        </div>
      </section>
    </main>
  );
}

export default function App() {
  return (
    <div className="relative flex h-[1800px] w-[2880px] flex-col overflow-hidden bg-[#64736b] font-['Inter',sans-serif]">
      <Gradients />
      <MenuBar />
      <div className="h-[2px] shrink-0 bg-[linear-gradient(90deg,#5f7a68_0px,#3d5c50_600px,#56837a_1000px,#47655c_1250px,#1b0f0d_1400px,#1d0c0a_2400px,#4a3a2c_2700px,#707a70_2880px)]" />
      <div className="flex min-h-0 flex-1 flex-col overflow-hidden rounded-[10px]">
        <TabStrip />
        <Toolbar />
        <MessageBank />
      </div>
      <Dock />
    </div>
  );
}
